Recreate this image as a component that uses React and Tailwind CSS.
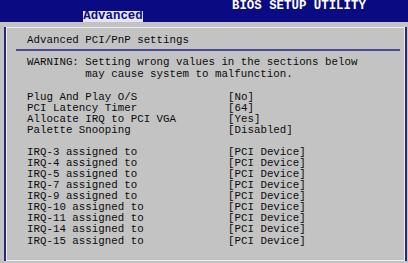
export default function App() {
  const mono = "font-['Liberation_Mono','DejaVu_Sans_Mono',monospace]";
  const settings = [
    ["Plug And Play O/S", "[No]"],
    ["PCI Latency Timer", "[64]"],
    ["Allocate IRQ to PCI VGA", "[Yes]"],
    ["Palette Snooping", "[Disabled]"],
  ];
  const irqs = ["3", "4", "5", "7", "9", "10", "11", "14", "15"];
  return (
    <div className={`w-[408px] h-[263px] bg-[#c3c3c3] flex flex-col overflow-hidden ${mono}`}>
      <div className="h-[22px] bg-[#0a0a82] flex flex-col">
        <div className="h-[11px] pl-[232px] pt-[1px] text-[12.4px] leading-[11px] font-bold text-white">
          BIOS SETUP UTILITY
        </div>
        <div className="h-[11px] ml-[83px] w-[60px] bg-[#e4e4f2] text-[#0a0a82] text-[12.4px] font-bold leading-[11px] flex items-center justify-center">
          Advanced
        </div>
      </div>
      <div className="h-[5px]" />
      <div className="flex-1 mb-[2px] ml-[4px] mr-[1px] border-l-2 border-r-2 border-[#2a2a78] flex">
        <div className="flex-1 border border-[#ececf8] flex flex-col text-[10.8px] leading-[11px] text-[#0c0c0c]">
          <div className="pl-[20px] pt-[7px] h-[21px]">Advanced PCI/PnP settings</div>
          <div className="ml-[9px] mr-[4px] h-[2px] bg-[#4a4a94]" />
          <div className="pl-[20px] pt-[6px] whitespace-pre">
            <div className="h-[12px]">WARNING: Setting wrong values in the sections below</div>
            <div className="h-[11px]">{"         may cause system to malfunction."}</div>
            <div className="h-[11.5px]" />
            {settings.map(([l, v]) => (
              <div key={l} className="flex h-[11.08px]">
                <div className="w-[201px]">{l}</div>
                <div>{v}</div>
              </div>
            ))}
            <div className="h-[11.08px]" />
            {irqs.map((n) => (
              <div key={n} className="flex h-[11.08px]">
                <div className="w-[201px]">{`IRQ-${n} assigned to`}</div>
                <div>[PCI Device]</div>
              </div>
            ))}
          </div>
        </div>
      </div>
    </div>
  );
}
